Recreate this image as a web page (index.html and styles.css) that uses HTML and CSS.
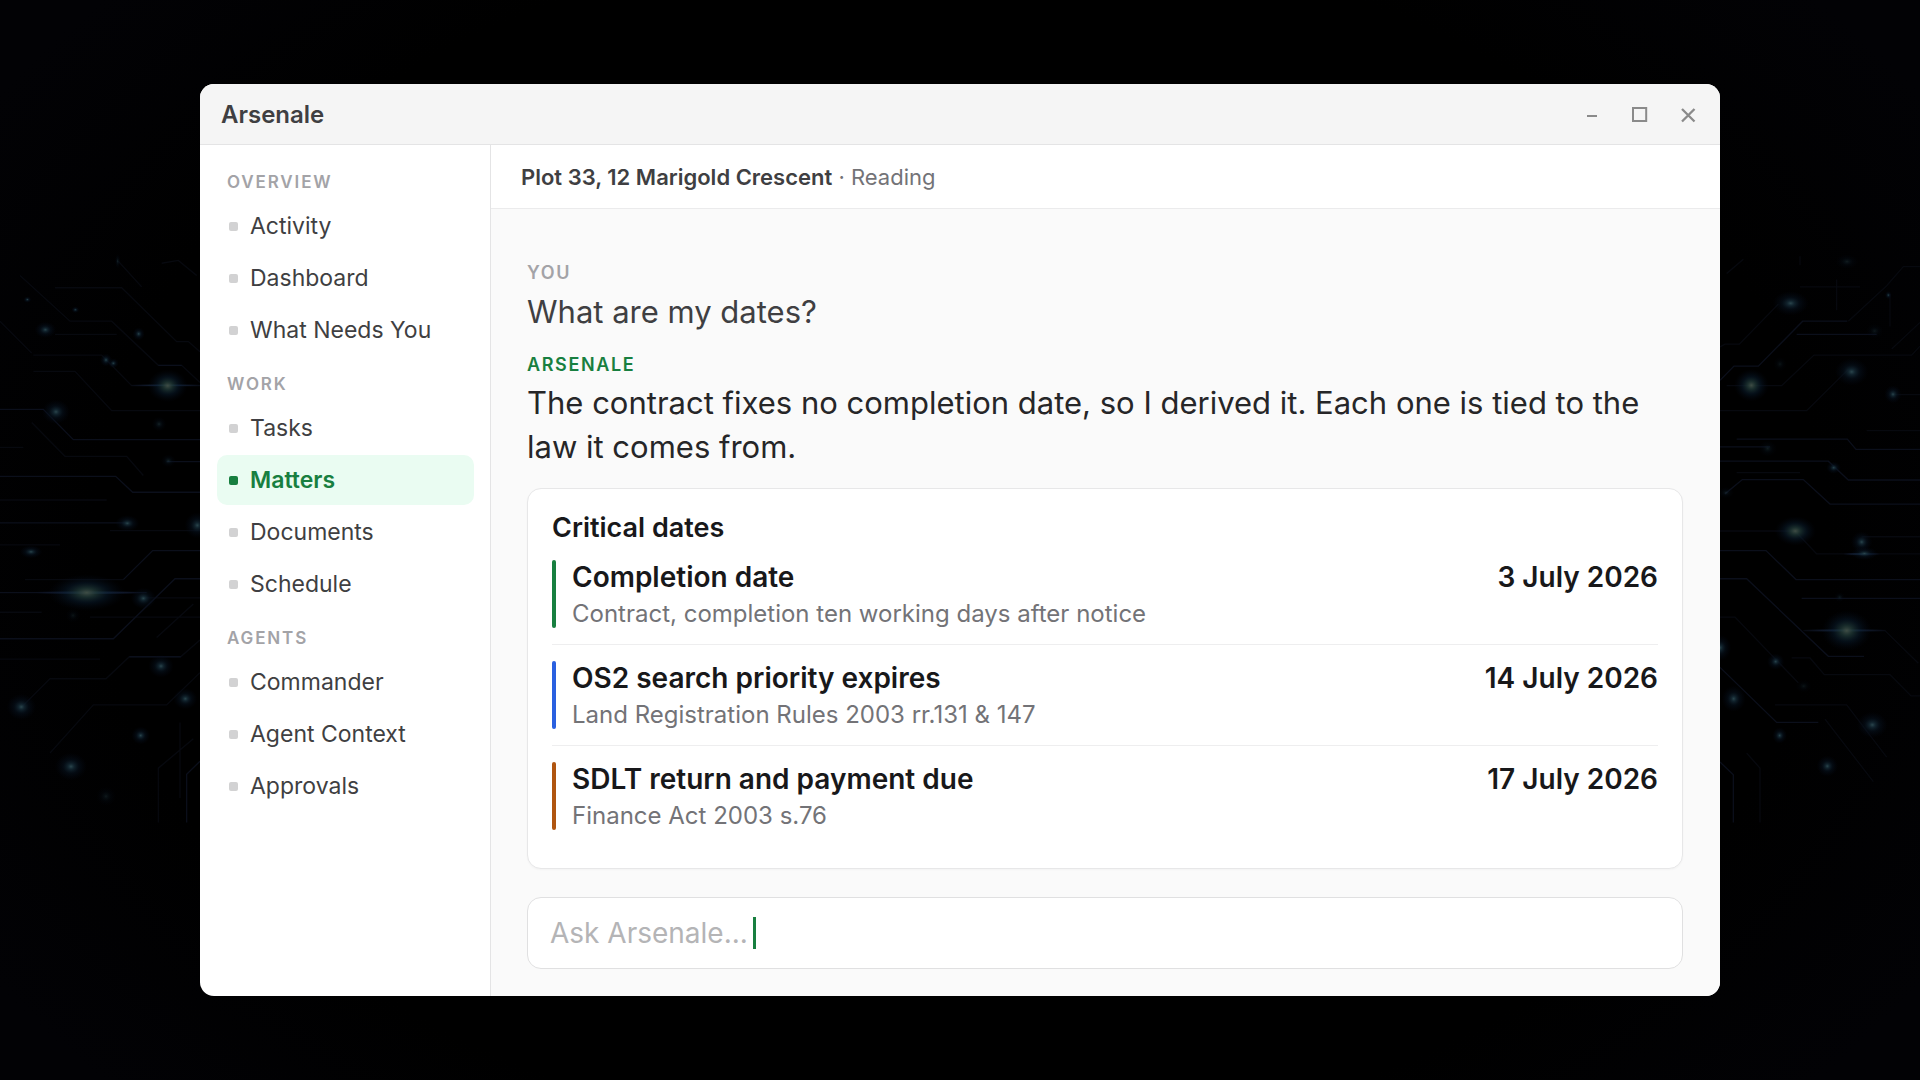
FILE: index.html
```html
<!DOCTYPE html>
<html lang="en">
<head>
<meta charset="utf-8">
<title>Arsenale</title>
<link rel="stylesheet" href="styles.css">
</head>
<body>
<svg class="circuit" viewBox="0 0 1920 1080" aria-hidden="true">
  <defs>
    <radialGradient id="blue"><stop offset="0" stop-color="#2a454c"/><stop offset=".2" stop-color="#152b37" stop-opacity=".8"/><stop offset=".5" stop-color="#071422" stop-opacity=".5"/><stop offset="1" stop-color="#040a18" stop-opacity="0"/></radialGradient>
    <radialGradient id="warm"><stop offset="0" stop-color="#3e4c44"/><stop offset=".25" stop-color="#1e3635" stop-opacity=".8"/><stop offset=".55" stop-color="#091c2e" stop-opacity=".5"/><stop offset="1" stop-color="#040a18" stop-opacity="0"/></radialGradient>
    <linearGradient id="streak"><stop offset="0" stop-color="#142144" stop-opacity="0"/><stop offset=".5" stop-color="#1d3249"/><stop offset="1" stop-color="#142144" stop-opacity="0"/></linearGradient>
  </defs>
  <g class="traces" transform="translate(0 200) scale(.33333 .40816)">
    <path class="dim" d="M60 185L210 297H335L475 405H545L600 447M165 215H365L530 347H565L600 372M355 150L425 213M485 155L535 148L590 185M0 297L95 375M100 380H305L395 455H600M100 420H225L335 516H600M95 545L195 628H380L430 675M165 329H350M0 606H70M0 735H320M0 845H180M0 1010H125M0 1125H300M75 930H370M270 1022H600M430 975H600M330 810H600M470 1072L580 990M150 1355L280 1237H500L600 1158M475 1525V1392L580 1320M540 1280V1465M65 1242L150 1173H318L388 1119H542L600 1078"/>
    <path d="M0 513H130L220 587H600M0 677H347L398 716H600M0 791H380M370 930L458 859H600M0 1075H340L525 928H600M0 962H440M560 1525V1407L600 1375M388 1119H542M475 405H545M500 641H600"/>
  </g>
  <g transform="translate(0 200) scale(.33333 .40816)">
    <rect x="110" y="959" width="310" height="6" fill="url(#streak)"/>
    <rect x="390" y="452" width="220" height="4" fill="url(#streak)"/>
    <ellipse cx="260" cy="962" rx="115" ry="45" fill="url(#warm)"/>
    <ellipse cx="503" cy="455" rx="60" ry="40" fill="url(#warm)"/>
    <g fill="url(#blue)">
      <ellipse cx="168" cy="519" rx="42" ry="30"/><ellipse cx="382" cy="792" rx="36" ry="20"/><ellipse cx="592" cy="797" rx="38" ry="32"/>
      <ellipse cx="430" cy="976" rx="38" ry="26"/><ellipse cx="93" cy="862" rx="34" ry="16"/><ellipse cx="64" cy="1242" rx="44" ry="32"/>
      <ellipse cx="483" cy="1142" rx="38" ry="28"/><ellipse cx="556" cy="1222" rx="36" ry="26"/><ellipse cx="422" cy="1312" rx="28" ry="22"/>
      <ellipse cx="213" cy="1388" rx="48" ry="34"/><ellipse cx="136" cy="318" rx="32" ry="20"/><ellipse cx="416" cy="328" rx="18" ry="16"/>
      <ellipse cx="226" cy="269" rx="12" ry="8"/><ellipse cx="82" cy="244" rx="12" ry="8"/><ellipse cx="340" cy="400" rx="16" ry="12"/><ellipse cx="318" cy="392" rx="18" ry="16"/>
      <ellipse cx="353" cy="150" rx="8" ry="18" opacity=".5"/><ellipse cx="477" cy="549" rx="22" ry="18" opacity=".5"/><ellipse cx="505" cy="639" rx="22" ry="16" opacity=".5"/>
      <ellipse cx="219" cy="1018" rx="22" ry="18" opacity=".3"/><ellipse cx="318" cy="1461" rx="30" ry="24" opacity=".35"/>
    </g>
  </g>
  <g class="traces" transform="translate(1710 200) scale(.33333 .40816)">
    <path class="dim" d="M30 360L45 353H88L205 255M270 213H450M415 297L530 210L580 163H630M50 455H215L312 380H605L630 358M30 516H290L415 415M545 365L630 300M470 565H630M550 477H630M80 668H270M30 811H255L320 867H630M30 1022H75L265 1183M245 1122H300L343 1163H540L603 1215H630M280 1055H525L625 1135M195 1237H410L530 1365M345 1272L490 1425M150 1525V1392L110 1355M455 825H630M50 180L100 145M380 195V270M540 230V310M270 138V160"/>
    <path d="M30 442L72 407H145L278 297H412M260 329H500M80 586H412L438 611H630M30 605H180M30 640H355L415 686H630M45 720L97 685H280L360 745H630M30 859H168L258 930H630M30 928H110L355 1118H462M275 976H630M30 1145L200 1280H325M30 1377L70 1408V1525"/>
  </g>
  <g transform="translate(1710 200) scale(.33333 .40816)">
    <rect x="280" y="1052" width="250" height="5" fill="url(#streak)"/>
    <rect x="400" y="865" width="110" height="5" fill="url(#streak)"/>
    <ellipse cx="410" cy="1055" rx="75" ry="50" fill="url(#warm)"/>
    <ellipse cx="124" cy="454" rx="52" ry="40" fill="url(#warm)"/>
    <ellipse cx="256" cy="811" rx="62" ry="36" fill="url(#warm)"/>
    <g fill="url(#blue)">
      <ellipse cx="242" cy="253" rx="54" ry="30"/><ellipse cx="425" cy="421" rx="50" ry="34"/><ellipse cx="549" cy="476" rx="26" ry="22"/>
      <ellipse cx="371" cy="656" rx="22" ry="15"/><ellipse cx="455" cy="838" rx="32" ry="26"/><ellipse cx="463" cy="866" rx="40" ry="16"/>
      <ellipse cx="30" cy="1097" rx="34" ry="32"/><ellipse cx="197" cy="1131" rx="26" ry="20"/><ellipse cx="71" cy="1222" rx="36" ry="32"/>
      <ellipse cx="209" cy="1312" rx="22" ry="20"/><ellipse cx="487" cy="1286" rx="46" ry="32"/><ellipse cx="352" cy="1387" rx="32" ry="26"/>
      <ellipse cx="535" cy="233" rx="10" ry="10"/><ellipse cx="411" cy="151" rx="34" ry="18" opacity=".4"/><ellipse cx="173" cy="609" rx="28" ry="20" opacity=".4"/>
      <ellipse cx="494" cy="321" rx="26" ry="18" opacity=".35"/><ellipse cx="389" cy="973" rx="16" ry="12" opacity=".4"/><ellipse cx="48" cy="717" rx="24" ry="14" opacity=".4"/>
      <ellipse cx="210" cy="402" rx="20" ry="18" opacity=".3"/><ellipse cx="281" cy="1191" rx="24" ry="16" opacity=".3"/>
    </g>
  </g>
</svg>

<div class="window">
  <header class="titlebar">
    <span class="app-name">Arsenale</span>
    <svg class="controls" width="110" height="20" viewBox="0 0 110 20" fill="none" stroke="#8a8a8a" stroke-width="2">
      <path d="M1 12H11"/>
      <rect x="47" y="4" width="13.2" height="13"/>
      <path stroke-width="2.3" d="M96 5L108.500 17.500M108.500 5L96 17.500"/>
    </svg>
  </header>
  <div class="body">
    <nav class="sidebar">
      <h2 class="group">Overview</h2>
      <a class="item"><i class="dot"></i>Activity</a>
      <a class="item"><i class="dot"></i>Dashboard</a>
      <a class="item"><i class="dot"></i>What Needs You</a>
      <h2 class="group">Work</h2>
      <a class="item"><i class="dot"></i>Tasks</a>
      <a class="item active"><i class="dot"></i>Matters</a>
      <a class="item"><i class="dot"></i>Documents</a>
      <a class="item"><i class="dot"></i>Schedule</a>
      <h2 class="group">Agents</h2>
      <a class="item"><i class="dot"></i>Commander</a>
      <a class="item"><i class="dot"></i>Agent Context</a>
      <a class="item"><i class="dot"></i>Approvals</a>
    </nav>
    <main class="main">
      <div class="crumb"><span><b>Plot 33, 12 Marigold Crescent</b> · Reading</span></div>
      <section class="chat">
        <div class="who">YOU</div>
        <p class="say question">What are my dates?</p>
        <div class="who agent">ARSENALE</div>
        <p class="say answer">The contract fixes no completion date, so I derived it. Each one is tied to the law it comes from.</p>
        <div class="card">
          <h3 class="card-title">Critical dates</h3>
          <div class="row">
            <div class="event green"><div class="name">Completion date</div><div class="source">Contract, completion ten working days after notice</div></div>
            <div class="date">3 July 2026</div>
          </div>
          <div class="row">
            <div class="event blue"><div class="name">OS2 search priority expires</div><div class="source">Land Registration Rules 2003 rr.131 &amp; 147</div></div>
            <div class="date">14 July 2026</div>
          </div>
          <div class="row">
            <div class="event amber"><div class="name">SDLT return and payment due</div><div class="source">Finance Act 2003 s.76</div></div>
            <div class="date">17 July 2026</div>
          </div>
        </div>
        <div class="ask">Ask Arsenale...<i class="caret"></i></div>
      </section>
    </main>
  </div>
</div>
</body>
</html>
```
FILE: styles.css
```css
* { box-sizing: border-box; }

body {
  margin: 0;
  width: 1920px;
  height: 1080px;
  overflow: hidden;
  background: radial-gradient(ellipse 60% 75% at center, #000 75%, #020205 100%);
  font-family: Inter, "Liberation Sans", sans-serif;
  display: flex;
  justify-content: center;
  align-items: center;
}

h2, h3, p { margin: 0; font-weight: 400; }

.circuit { position: absolute; inset: 0; width: 1920px; height: 1080px; }
.traces path { fill: none; stroke: #0b0f1b; stroke-width: 1.3; vector-effect: non-scaling-stroke; }
.traces .dim { stroke: #07090f; }

.window {
  position: relative;
  width: 1520px;
  height: 912px;
  display: flex;
  flex-direction: column;
  border-radius: 14px;
  overflow: hidden;
  background: #fff;
}

.titlebar {
  height: 61px;
  padding: 0 24px 0 21px;
  display: flex;
  align-items: center;
  justify-content: space-between;
  background: #f5f5f5;
  border-bottom: 1px solid #e4e4e5;
}
.app-name { font-size: 24px; font-weight: 600; color: #3f3f42; }

.body { flex: 1; display: flex; min-height: 0; }

.sidebar {
  width: 291px;
  padding: 10px 16px 0 17px;
  display: flex;
  flex-direction: column;
  gap: 2px;
  border-right: 1px solid #e4e4e5;
}
.group {
  height: 44px;
  padding: 15px 0 0 10px;
  line-height: 24px;
  font-size: 17px;
  font-weight: 600;
  letter-spacing: 1.87px;
  text-transform: uppercase;
  color: #a3a3a7;
}
.item {
  height: 50px;
  padding: 0 12px;
  display: flex;
  align-items: center;
  gap: 12px;
  border-radius: 10px;
  font-size: 23px;
  color: #3f3f42;
}
.dot { width: 9px; height: 9px; border-radius: 2px; background: #d2d2d3; }
.active { background: #eafcf2; color: #187f40; font-weight: 600; }
.active .dot { background: #187f40; }

.main { flex: 1; display: flex; flex-direction: column; background: #fafafa; }
.crumb {
  height: 64px;
  padding-left: 30px;
  display: flex;
  align-items: center;
  background: #fff;
  border-bottom: 1px solid #ebebec;
  font-size: 22px;
  color: #737377;
}
.crumb b { font-weight: 600; color: #3f3f42; }

.chat { flex: 1; padding: 53px 37px 0 36px; }
.who { font-size: 18px; line-height: 22px; font-weight: 600; letter-spacing: 1.62px; color: #a3a3a7; }
.agent { margin-top: 20px; color: #187f40; }
.say { font-size: 31px; line-height: 44px; }
.question { margin-top: 6px; color: #3f3f42; }
.answer { margin-top: 5px; color: #262628; }

.card {
  height: 381px;
  margin-top: 19px;
  padding: 23px 24px 0;
  border: 1px solid #e7e7e8;
  border-radius: 14px;
  background: #fff;
  box-shadow: 0 1px 2px rgba(0, 0, 0, .03);
}
.card-title { line-height: 32px; font-size: 27px; font-weight: 600; color: #18181a; }
.row { display: flex; justify-content: space-between; padding: 16px 0; border-bottom: 1px solid #eeeeef; }
.row:last-child { border-bottom: 0; }
.event { position: relative; height: 68px; padding-left: 20px; }
.event::before { content: ""; position: absolute; left: 0; top: 0; width: 4px; height: 68px; border-radius: 2px; background: currentColor; }
.green { color: #187f40; }
.blue { color: #2a60e0; }
.amber { color: #b05510; }
.name, .date { font-size: 28px; line-height: 34px; font-weight: 600; color: #18181a; }
.source { margin-top: 5px; font-size: 24px; line-height: 29px; color: #737377; }

.ask {
  height: 72px;
  margin-top: 28px;
  padding-left: 22px;
  display: flex;
  align-items: center;
  gap: 5px;
  border: 1px solid #e0e0e1;
  border-radius: 14px;
  background: #fff;
  font-size: 28px;
  color: #b4b4b6;
}
.caret { width: 3px; height: 32px; background: #187f40; }
```
